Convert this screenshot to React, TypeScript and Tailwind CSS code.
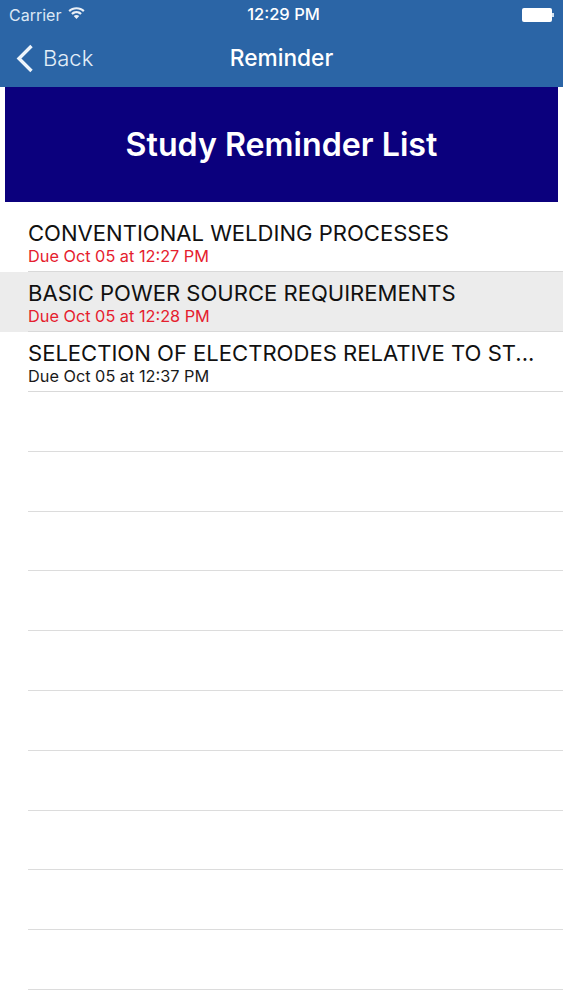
const reminders = [
  { title: 'CONVENTIONAL WELDING PROCESSES', due: 'Due Oct 05 at 12:27 PM', overdue: true },
  { title: 'BASIC POWER SOURCE REQUIREMENTS', due: 'Due Oct 05 at 12:28 PM', overdue: true, selected: true },
  { title: 'SELECTION OF ELECTRODES RELATIVE TO ST...', due: 'Due Oct 05 at 12:37 PM' },
]

const emptyRows = Array.from({ length: 10 })

function Wifi() {
  return (
    <svg width="17" height="13" viewBox="0 0 16 12" fill="white" className="opacity-90 -mt-[2px]">
      <path d="M8 0C5 0 2.400 1.100 .4 3l1.400 1.500C3.400 3 5.600 2 8 2s4.600 1 6.200 2.500L15.600 3C13.600 1.100 11 0 8 0z" />
      <path d="M8 3.700c-2 0-3.700.8-5 2l1.400 1.500c1-.9 2.200-1.500 3.600-1.500s2.600.6 3.600 1.500L13 5.700c-1.300-1.200-3-2-5-2z" />
      <path d="M8 7.400c-1 0-1.900.4-2.600 1L8 11.200l2.600-2.800c-.7-.6-1.600-1-2.600-1z" />
    </svg>
  )
}

function BackChevron() {
  return (
    <svg width="18" height="29" viewBox="0 0 18 29" fill="none" stroke="#edf4fb" strokeWidth="3.4" className="shrink-0">
      <path d="M15.500 2 3 14.500 15.500 27" />
    </svg>
  )
}

export default function App() {
  return (
    <div className="w-[563px] h-[1000px] overflow-hidden bg-white font-['Inter','Liberation_Sans',sans-serif]">
      <div className="h-[87px] bg-[#2b65a6] text-white">
        <div className="h-[29px] flex items-center justify-between pl-[9px] pr-[9px] relative">
          <div className="flex items-center gap-[7px] text-[16px] text-[#dbe8f5]">
            <span>Carrier</span>
            <Wifi />
          </div>
          <span className="absolute left-[4px] right-0 text-center text-[16.5px] font-medium">12:29 PM</span>
          <div className="flex items-center">
            <div className="w-[30px] h-[14px] rounded-[2px] bg-white" />
            <div className="w-[2px] h-[4px] bg-[#cfe0f0]" />
          </div>
        </div>
        <div className="h-[58px] flex items-center relative">
          <div className="flex items-center pl-[16px] gap-[9px]">
            <BackChevron />
            <span className="text-[22px] font-light text-[#e3eef8]">Back</span>
          </div>
          <span className="absolute left-0 right-0 text-center text-[22.7px] font-medium">Reminder</span>
        </div>
      </div>

      <div className="px-[5px]">
        <div className="h-[115px] pt-[2px] bg-[#0b007d] flex items-center justify-center text-white text-[32.2px] font-semibold">
          Study Reminder List
        </div>
      </div>

      <div className="pt-[10px]">
        {reminders.map((r) => (
          <div key={r.title} className={r.selected ? 'bg-[#ececec]' : ''}>
            <div className="h-[60px] ml-[28px] pt-[8px] border-b border-[#d9d9d9]">
              <div className="text-[22.05px] leading-[26px] text-[#111111] whitespace-nowrap">{r.title}</div>
              <div className={`mt-[1px] text-[16.3px] leading-[18px] ${r.overdue ? 'text-[#e5202e]' : 'text-[#1a1a1a]'}`}>{r.due}</div>
            </div>
          </div>
        ))}
        {emptyRows.map((_, i) => (
          <div key={i} className="h-[59.8px] ml-[28px] border-b border-[#dcdcdc]" />
        ))}
      </div>
    </div>
  )
}
